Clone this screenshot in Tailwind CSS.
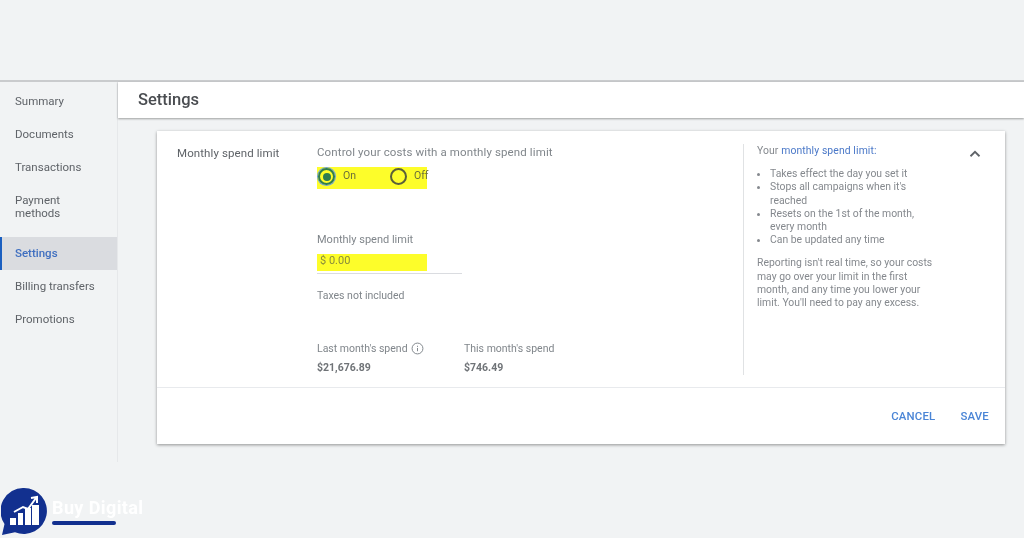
<!DOCTYPE html>
<html>
  <head>
    <meta charset="utf-8" />
    <title>Settings</title>
    <script src="https://cdn.jsdelivr.net/npm/@tailwindcss/browser@4"></script>
  </head>
  <body class="bg-[#f1f3f4] font-[Roboto,sans-serif] text-[#5f6368] w-[1024px] h-[538px] overflow-hidden blur-[0.4px]">
    <div class="h-[80px]"></div>

    <div class="flex h-[382px] border-t-2 border-[#c9cbcd]">
      <!-- sidebar -->
      <nav class="w-[118px] shrink-0 border-r border-[#e6e8ea] text-[11.5px] leading-[13px] pt-[3px]">
        <a class="flex items-center h-[33px] pl-[15px]">Summary</a>
        <a class="flex items-center h-[33px] pl-[15px]">Documents</a>
        <a class="flex items-center h-[33px] pl-[15px]">Transactions</a>
        <a class="flex items-center h-[46px] pl-[15px] pb-px">Payment<br />methods</a>
        <a class="flex items-center h-[33px] pl-[13px] mt-[7px] bg-[#dadce0] border-l-2 border-[#1a5fc0] text-[#3f6fc0] font-medium">Settings</a>
        <a class="flex items-center h-[33px] pl-[15px]">Billing transfers</a>
        <a class="flex items-center h-[33px] pl-[15px]">Promotions</a>
      </nav>

      <main class="flex-1 min-w-0">
        <header class="h-[36px] bg-white shadow-[0_1px_2px_rgba(0,0,0,0.35)] pl-[20px] flex items-center text-[16.5px] font-medium text-[#4a4d51]">Settings</header>

        <!-- card -->
        <section class="ml-[39px] mt-[13px] w-[848px] h-[313px] bg-white shadow-[0_1px_3px_rgba(0,0,0,0.4)] flex flex-col">
          <div class="flex h-[257px] border-b border-[#e8eaed]">
            <div class="w-[160px] shrink-0 pl-[20px] pt-[15px] text-[11.5px] leading-[14px] tracking-[0.1px]">Monthly spend limit</div>

            <div class="w-[426px] shrink-0 text-[11px] text-[#80868b]">
              <p class="mt-[14px] text-[11.5px] leading-[14px] tracking-[0.12px]">Control your costs with a monthly spend limit</p>
              <div class="mt-[8px] w-[110px] h-[22px] bg-[#fdfd2a] flex items-start text-[#6b6f3a] text-[10.5px] leading-[14px]">
                <span class="shrink-0 mt-[1px] ml-[1px] w-[17px] h-[17px] rounded-full border-2 border-[#2e7d4f] shadow-[0_0_0_1px_#6f9fe0] flex items-center justify-center">
                  <span class="w-[8px] h-[8px] rounded-full bg-[#2e7d4f]"></span>
                </span>
                <span class="shrink-0 ml-[8px] mt-[2px] w-[47px]">On</span>
                <span class="shrink-0 w-[17px] h-[17px] mt-[1px] rounded-full border-2 border-[#5a5f3a]"></span>
                <span class="shrink-0 ml-[7px] mt-[2px]">Off</span>
              </div>
              <p class="mt-[44px] leading-[13px]">Monthly spend limit</p>
              <div class="mt-[8px] w-[145px] h-[20px] border-b border-[#dadce0]">
                <div class="w-[110px] h-[17px] bg-[#fdfd2a] pl-[3px] text-[11px] leading-[13px] text-[#8a8c3c]">$ 0.00</div>
              </div>
              <p class="mt-[15px] text-[10.5px] leading-[13px]">Taxes not included</p>
              <div class="mt-[40px] flex text-[10.5px] leading-[13px]">
                <div class="w-[147px]">
                  <p class="flex items-center h-[13px]">Last month's spend
                    <svg class="ml-[3px]" width="13" height="13" viewBox="0 0 24 24" fill="none" stroke="#80868b" stroke-width="1.8">
                      <circle cx="12" cy="12" r="10" />
                      <path d="M12 11v6M12 7v2" />
                    </svg>
                  </p>
                  <p class="mt-[6px] font-bold text-[#6f7377]">$21,676.89</p>
                </div>
                <div>
                  <p>This month's spend</p>
                  <p class="mt-[6px] font-bold text-[#6f7377]">$746.49</p>
                </div>
              </div>
            </div>

            <aside class="w-[223px] shrink-0 h-[231px] mt-[13px] border-l border-[#e0e2e4] pl-[13px] text-[10.4px] leading-[13.2px] text-[#85898e]">
              <p class="tracking-[0.1px]">Your <span class="text-[#4a78c8]">monthly spend limit:</span></p>
              <ul class="mt-[10px] list-disc pl-[13px] w-[165px]">
                <li>Takes effect the day you set it</li>
                <li>Stops all campaigns when it's reached</li>
                <li>Resets on the 1st of the month, every month</li>
                <li>Can be updated any time</li>
              </ul>
              <p class="mt-[10px] w-[178px]">Reporting isn't real time, so your costs may go over your limit in the first month, and any time you lower your limit. You'll need to pay any excess.</p>
            </aside>

            <div class="pt-[14px]">
              <svg width="18" height="18" viewBox="0 0 24 24" fill="none" stroke="#5f6368" stroke-width="2.4">
                <path d="M6 15l6-6 6 6" />
              </svg>
            </div>
          </div>

          <div class="flex-1 flex items-center justify-end gap-[25px] pr-[16px] pt-[2px] text-[11.4px] font-medium text-[#4a85d6] tracking-[0.2px]">
            <button>CANCEL</button>
            <button>SAVE</button>
          </div>
        </section>
      </main>
    </div>

    <!-- watermark logo -->
    <div class="flex mt-[26px] ml-[1px]">
      <svg width="46" height="47" viewBox="0 0 46 47">
        <path d="M23 0a23 23 0 1 1-9 44.2L1 47l2.5-11A23 23 0 0 1 23 0z" fill="#12308f" />
        <path d="M9 37v-7h6v7zM17 37V25h5v12zM24 37V20h6v17zM31 37V17h7v20z" fill="#fff" />
        <path d="M13 24l9-5 5 2 8-11M30 10l6-1v6" fill="none" stroke="#fff" stroke-width="2" />
      </svg>
      <div class="ml-[5px] w-[64px]">
        <p class="mt-[10px] text-[18px] leading-[20px] font-bold text-white tracking-[0.4px] whitespace-nowrap">Buy Digital</p>
        <div class="mt-[3px] h-[4px] rounded-full bg-[#12308f]"></div>
      </div>
    </div>
  </body>
</html>
